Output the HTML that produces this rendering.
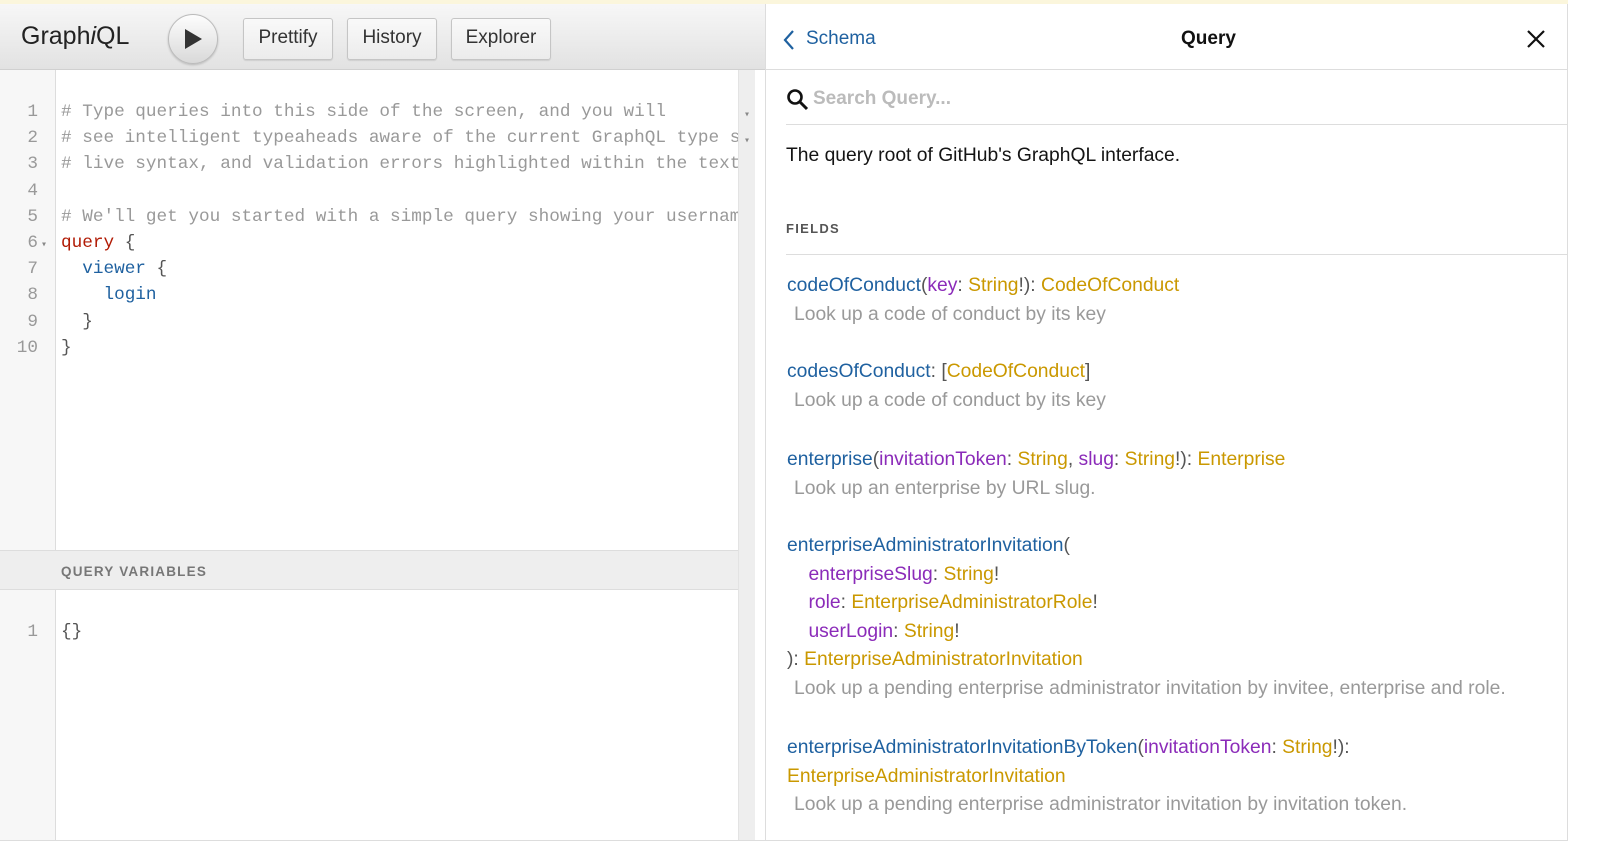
<!DOCTYPE html>
<html><head><meta charset="utf-8"><style>
*{margin:0;padding:0;box-sizing:border-box}
body{width:1600px;height:848px;background:#fff;position:relative;overflow:hidden;font-family:"Liberation Sans",sans-serif}
.abs{position:absolute}
.top{left:0;top:0;width:1568px;height:4px;background:#fbf6dc}
.tb{left:0;top:4px;width:765px;height:66px;background:linear-gradient(#f7f7f7,#e2e2e2);border-bottom:1px solid #d0d0d0}
.btn{position:absolute;top:14px;height:42px;border:1px solid #c5c5c5;border-radius:3px;background:linear-gradient(#f9f9f9,#ececec);font-size:19px;color:#333;text-align:center;line-height:38px;box-shadow:0 1px 1px rgba(0,0,0,.1)}
.code{font-family:"Liberation Mono",monospace;font-size:17.7px;line-height:26.2px;white-space:pre}
.gut{left:0;top:70px;width:56px;height:480px;background:#f7f7f7;border-right:1px solid #ddd}
.gut2{left:0;top:590px;width:56px;height:250px;background:#f7f7f7;border-right:1px solid #ddd}
.ln{color:#999;text-align:right;width:38px}
.c{color:#999}.k{color:#b11a04}.f{color:#1f61a0}.p{color:#555}
.de{left:765px;top:4px;width:803px;height:836px;background:#fff;border-left:1px solid #ddd;border-right:1px solid #ddd}
.fn{color:#1f61a0}.ar{color:#8b2bb9}.ty{color:#ca9800}.pu{color:#555}
.fld{position:absolute;left:21px;font-size:19.3px;line-height:28.6px;color:#555}
.ds{color:#999;padding-left:7px}
</style></head><body>
<div class="abs top"></div>
<div class="abs tb">
 <div class="abs" style="left:21px;top:18px;font-size:25px;color:#222">Graph<i>i</i>QL</div>
 <div class="abs" style="left:168px;top:10px;width:50px;height:50px;border-radius:50%;border:1px solid #bbb;background:linear-gradient(#fdfdfd,#d9d9d9);box-shadow:0 1px 2px rgba(0,0,0,.2)"><svg width="50" height="50" style="position:absolute;left:-1px;top:-1px"><path d="M17 15 L34 25 L17 35Z" fill="#333"/></svg></div>
 <div class="btn" style="left:243px;width:90px">Prettify</div>
 <div class="btn" style="left:347px;width:90px">History</div>
 <div class="btn" style="left:451px;width:100px">Explorer</div>
</div>
<div class="abs gut"></div>
<div class="abs gut2"></div>
<div class="abs" style="left:738px;top:70px;width:17px;height:770px;background:#eee;border-left:1px solid #e3e3e3"></div>
<div class="abs" style="left:0;top:550px;width:738px;height:40px;background:#eee;border-top:1px solid #ddd;border-bottom:1px solid #ddd;font-size:13.5px;font-weight:bold;letter-spacing:1.2px;color:#777;padding:13px 0 0 61px">QUERY VARIABLES</div>
<div class="abs code ln" style="left:0;top:99px">1
2
3
4
5
6
7
8
9
10</div>
<div class="abs code" style="left:41px;top:233px;font-size:10px;color:#888">▾</div>
<div class="abs code" style="left:744px;top:103px;font-size:10px;color:#888;line-height:26px">▾
▾</div>
<div class="abs code" style="left:61px;top:99px;width:677px;overflow:hidden"><span class="c"># Type queries into this side of the screen, and you will
# see intelligent typeaheads aware of the current GraphQL type schema,
# live syntax, and validation errors highlighted within the text.

# We'll get you started with a simple query showing your username!</span>
<span class="k">query</span> <span class="p">{</span>
  <span class="f">viewer</span> <span class="p">{</span>
    <span class="f">login</span>
  <span class="p">}</span>
<span class="p">}</span></div>
<div class="abs code ln" style="left:0;top:619px">1</div>
<div class="abs code p" style="left:61px;top:619px">{}</div>
<div class="abs" style="left:0;top:840px;width:1568px;height:1px;background:#ddd"></div>
<div class="abs de">
 <div class="abs" style="left:0;top:0;width:801px;height:66px;border-bottom:1px solid #ddd"></div>
 <svg class="abs" style="left:16px;top:24px" width="14" height="24"><path d="M11 3 L3 12 L11 21" stroke="#1f61a0" stroke-width="2.2" fill="none"/></svg>
 <div class="abs" style="left:40px;top:24px;font-size:19px;color:#1f61a0">Schema</div>
 <div class="abs" style="left:415px;top:24px;font-size:19px;font-weight:bold;color:#111">Query</div>
 <svg class="abs" style="left:760px;top:25px" width="20" height="20"><path d="M2 2 L18 18 M18 2 L2 18" stroke="#111" stroke-width="2.2"/></svg>
 <svg class="abs" style="left:20px;top:84px" width="24" height="24"><circle cx="9" cy="9" r="6.5" stroke="#111" stroke-width="2.6" fill="none"/><path d="M14 14 L21 21" stroke="#111" stroke-width="3"/></svg>
 <div class="abs" style="left:47px;top:84px;font-size:19px;color:#bbb;font-weight:bold">Search Query...</div>
 <div class="abs" style="left:20px;top:120px;width:781px;height:1px;background:#ddd"></div>
 <div class="abs" style="left:20px;top:141px;font-size:19.3px;color:#141414">The query root of GitHub's GraphQL interface.</div>
 <div class="abs" style="left:20px;top:217px;font-size:13px;font-weight:bold;letter-spacing:1.3px;color:#555">FIELDS</div>
 <div class="abs" style="left:20px;top:250px;width:781px;height:1px;background:#ddd"></div>
 <div class="fld" style="top:268px"><span class="fn">codeOfConduct</span>(<span class="ar">key</span>: <span class="ty">String</span>!): <span class="ty">CodeOfConduct</span><br><span class="ds">Look up a code of conduct by its key</span></div>
 <div class="fld" style="top:354px"><span class="fn">codesOfConduct</span>: [<span class="ty">CodeOfConduct</span>]<br><span class="ds">Look up a code of conduct by its key</span></div>
 <div class="fld" style="top:442px"><span class="fn">enterprise</span>(<span class="ar">invitationToken</span>: <span class="ty">String</span>, <span class="ar">slug</span>: <span class="ty">String</span>!): <span class="ty">Enterprise</span><br><span class="ds">Look up an enterprise by URL slug.</span></div>
 <div class="fld" style="top:528px"><span class="fn">enterpriseAdministratorInvitation</span>(<br>&nbsp;&nbsp;&nbsp;&nbsp;<span class="ar">enterpriseSlug</span>: <span class="ty">String</span>!<br>&nbsp;&nbsp;&nbsp;&nbsp;<span class="ar">role</span>: <span class="ty">EnterpriseAdministratorRole</span>!<br>&nbsp;&nbsp;&nbsp;&nbsp;<span class="ar">userLogin</span>: <span class="ty">String</span>!<br>): <span class="ty">EnterpriseAdministratorInvitation</span><br><span class="ds">Look up a pending enterprise administrator invitation by invitee, enterprise and role.</span></div>
 <div class="fld" style="top:730px"><span class="fn">enterpriseAdministratorInvitationByToken</span>(<span class="ar">invitationToken</span>: <span class="ty">String</span>!):<br><span class="ty">EnterpriseAdministratorInvitation</span><br><span class="ds">Look up a pending enterprise administrator invitation by invitation token.</span></div>
</div>
</body></html>
